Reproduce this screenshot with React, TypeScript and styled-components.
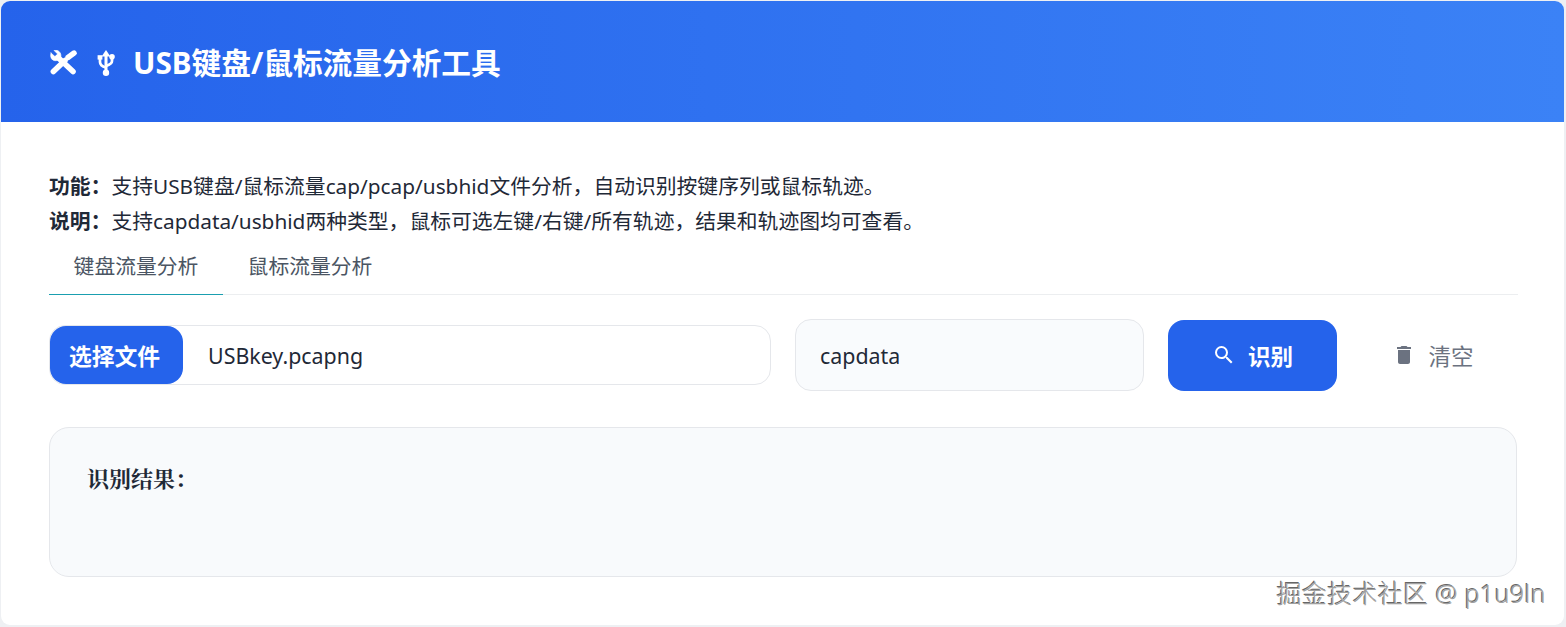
import { useState } from 'react';
import styled, { createGlobalStyle } from 'styled-components';
import { MdDelete, MdSearch } from 'react-icons/md';

const fontStack = `'Noto Sans', 'Noto Sans CJK SC', sans-serif`;

const GlobalStyle = createGlobalStyle`
  html, body {
    margin: 0;
    padding: 0;
    background: #eef0f3;
    font-family: ${fontStack};
  }
  * {
    box-sizing: border-box;
  }
`;

const Page = styled.div`
  width: 1566px;
  height: 627px;
  padding: 1px 2px 2px 1px;
  overflow: hidden;
  position: relative;
`;

const Card = styled.div`
  height: 100%;
  background: #fff;
  border-radius: 9px;
  overflow: hidden;
`;

const Header = styled.header`
  height: 121px;
  padding: 2px 0 0 49px;
  display: flex;
  align-items: center;
  background: linear-gradient(90deg, #2563eb, #3b82f6);
  color: #fff;
`;

const HeaderIcons = styled.span`
  display: flex;
  align-items: center;
  gap: 20px;
  margin-right: 18px;
`;

const Title = styled.h1`
  margin: 0;
  font-size: 29.7px;
  font-weight: 700;
  line-height: 1;
`;

const Body = styled.main`
  padding: 47px 46px 0 48px;
`;

const Note = styled.p`
  margin: 0;
  font-size: 20.8px;
  line-height: 35px;
  color: #1f2937;
`;

const Strong = styled.b`
  font-weight: 700;
`;

const Tabs = styled.nav`
  display: flex;
  height: 56px;
  border-bottom: 1px solid #eceef0;
`;

const Tab = styled.button<{ $active: boolean }>`
  width: 174px;
  height: 56px;
  padding: 0 0 3px;
  background: none;
  border: 0;
  border-bottom: 1px solid ${(props) => (props.$active ? '#1a9fb0' : 'transparent')};
  font-family: ${fontStack};
  font-size: 20.8px;
  color: #4b5563;
`;

const Controls = styled.div`
  display: flex;
  align-items: center;
  margin-top: 24px;
  height: 72px;
`;

const FileField = styled.label`
  width: 722px;
  height: 60px;
  display: flex;
  align-items: center;
  background: #fff;
  border: 1px solid #e5e7eb;
  border-radius: 16px;
  margin-right: 24px;
`;

const FileButton = styled.span`
  width: 133px;
  height: 58px;
  padding-right: 4px;
  display: flex;
  align-items: center;
  justify-content: center;
  background: #2563eb;
  border-radius: 16px;
  color: #fff;
  font-size: 22.8px;
  font-weight: 700;
`;

const FileName = styled.span`
  margin-left: 25px;
  font-size: 21.4px;
  color: #1f2937;
`;

const TypeField = styled.div`
  width: 349px;
  height: 72px;
  display: flex;
  align-items: center;
  padding-left: 24px;
  background: #f9fbfd;
  border: 1px solid #e5e7eb;
  border-radius: 16px;
  margin-right: 24px;
  font-size: 21.4px;
  color: #1f2937;
`;

const Button = styled.button<{ $primary?: boolean }>`
  width: ${(props) => (props.$primary ? '169px' : '144px')};
  height: 71px;
  margin-left: ${(props) => (props.$primary ? '0' : '24px')};
  display: flex;
  align-items: center;
  justify-content: center;
  gap: 12px;
  border: 0;
  border-radius: 16px;
  background: ${(props) => (props.$primary ? '#2563eb' : 'transparent')};
  color: ${(props) => (props.$primary ? '#fff' : '#6b7280')};
  font-family: ${fontStack};
  font-size: 22.5px;
  font-weight: ${(props) => (props.$primary ? 700 : 400)};
  svg {
    font-size: 24px;
  }
`;

const Result = styled.section`
  margin-top: 36px;
  width: 1468px;
  height: 150px;
  padding: 35px 37px;
  background: #f8fafc;
  border: 1px solid #e5e7eb;
  border-radius: 20px;
`;

const ResultLabel = styled.div`
  font-family: 'Noto Serif CJK SC', 'Liberation Serif', 'Noto Sans CJK SC', serif;
  font-size: 22px;
  font-weight: 700;
  line-height: 30px;
  color: #1f2937;
`;

const Watermark = styled.div`
  position: absolute;
  right: 20px;
  bottom: 21px;
  font-size: 24.9px;
  font-weight: 300;
  line-height: 1;
  letter-spacing: 0.4px;
  color: #a0a0a0;
  text-shadow: 1px 1px 0 #fff, -1px -1px 0 #666;
`;

function ToolsIcon() {
  return (
    <svg width="27" height="25" viewBox="0 0 27 25" fill="none" stroke="#fff" strokeLinecap="round">
      <path d="M8 7.5 L23 21.5" strokeWidth="5.6" />
      <path d="M1 3 L5 6.6 L7.6 4 L4 0.4 C8.5 -0.8 11.6 3 10.8 6.8 C10 10.4 5.5 11.6 2.8 10 C0.6 8.6 0.2 5.5 1 3 Z" fill="#fff" strokeWidth="0.6" />
      <path d="M3.4 21.5 L15 10.5" strokeWidth="5.6" />
      <path d="M18 7.5 L24 3" strokeWidth="5.4" />
    </svg>
  );
}

function UsbIcon() {
  return (
    <svg width="18" height="26" viewBox="0 0 18 26" fill="none" stroke="#fff" strokeWidth="3">
      <path d="M9 4 V22" />
      <path d="M9 0 L13.4 6.4 H4.6 Z" fill="#fff" stroke="none" />
      <circle cx="9" cy="22.8" r="3.2" fill="#fff" stroke="none" />
      <path d="M3 8 V12 Q3 16 9 17.5" strokeWidth="2.7" />
      <path d="M15 8 V11 Q15 14 9 16" strokeWidth="2.7" />
      <rect x="0.6" y="5.2" width="4.8" height="4.4" fill="#fff" stroke="none" />
      <circle cx="15" cy="6.8" r="2.8" fill="#fff" stroke="none" />
    </svg>
  );
}

export default function App() {
  const [tab, setTab] = useState('keyboard');

  return (
    <Page>
      <GlobalStyle />
      <Card>
        <Header>
          <HeaderIcons>
            <ToolsIcon />
            <UsbIcon />
          </HeaderIcons>
          <Title>USB键盘/鼠标流量分析工具</Title>
        </Header>
        <Body>
          <Note>
            <Strong>功能：</Strong>支持USB键盘/鼠标流量cap/pcap/usbhid文件分析，自动识别按键序列或鼠标轨迹。
          </Note>
          <Note>
            <Strong>说明：</Strong>支持capdata/usbhid两种类型，鼠标可选左键/右键/所有轨迹，结果和轨迹图均可查看。
          </Note>
          <Tabs>
            <Tab $active={tab === 'keyboard'} onClick={() => setTab('keyboard')}>
              键盘流量分析
            </Tab>
            <Tab $active={tab === 'mouse'} onClick={() => setTab('mouse')}>
              鼠标流量分析
            </Tab>
          </Tabs>
          <Controls>
            <FileField>
              <FileButton>选择文件</FileButton>
              <FileName>USBkey.pcapng</FileName>
            </FileField>
            <TypeField>capdata</TypeField>
            <Button $primary>
              <MdSearch />
              识别
            </Button>
            <Button>
              <MdDelete />
              清空
            </Button>
          </Controls>
          <Result>
            <ResultLabel>识别结果：</ResultLabel>
          </Result>
        </Body>
      </Card>
      <Watermark>掘金技术社区 @ p1u9ln</Watermark>
    </Page>
  );
}
